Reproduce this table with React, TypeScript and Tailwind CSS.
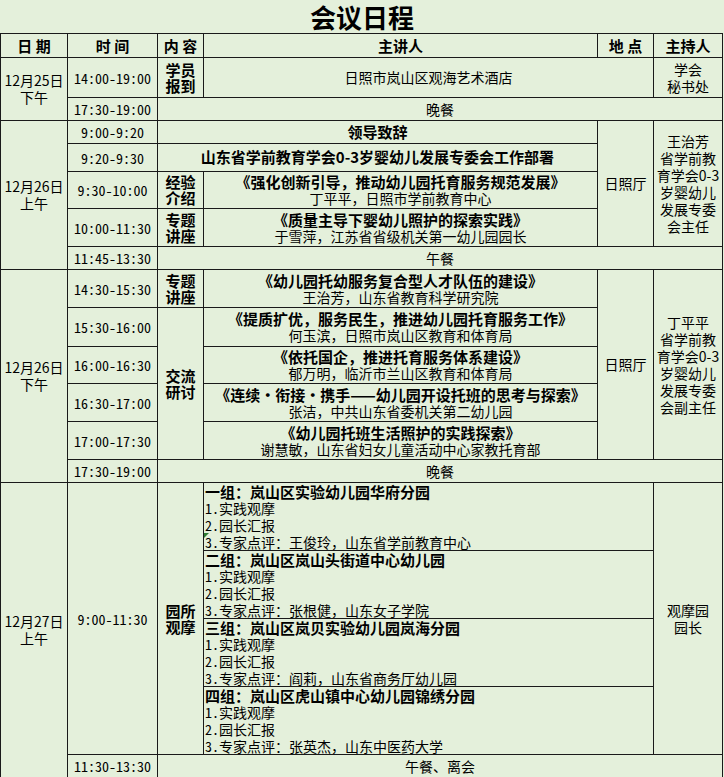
import type { ReactNode } from "react";

const MONO = "font-['Noto_Sans_Mono_CJK_SC','Liberation_Mono',monospace]";

function Cell({ className = "", children }: { className?: string; children?: ReactNode }) {
  return (
    <div className={`flex flex-col items-center justify-center bg-[#e4f0db] text-center ${className}`}>
      {children}
    </div>
  );
}

function Head({ children }: { children: ReactNode }) {
  return <Cell className="text-[15px] font-bold leading-none">{children}</Cell>;
}

function Time({ children, className = "" }: { children: ReactNode; className?: string }) {
  return <Cell className={`${MONO} text-[14px] leading-none ${className}`}>{children}</Cell>;
}

function Stack({ lines, bold, className = "" }: { lines: string[]; bold?: boolean; className?: string }) {
  return (
    <Cell className={`${bold ? "text-[15px] font-bold leading-[16px]" : "text-[14px] leading-[17px]"} ${className}`}>
      {lines.map((line) => (
        <p key={line}>{line}</p>
      ))}
    </Cell>
  );
}

function Talk({ title, speaker }: { title: string; speaker: string }) {
  return (
    <Cell className="leading-[17px]">
      <p className="text-[15px] font-bold">{title}</p>
      <p className="text-[14px]">{speaker}</p>
    </Cell>
  );
}

function Meal({ children }: { children: ReactNode }) {
  return <Cell className="col-span-4 text-[14px] leading-none">{children}</Cell>;
}

function Group({ name, expert, marker }: { name: string; expert: string; marker?: boolean }) {
  return (
    <div className="relative col-span-2 overflow-hidden bg-[#e4f0db] px-px text-[14px] leading-[17px] whitespace-nowrap">
      <p className="text-[15px] font-bold">{name}</p>
      <p>
        <span className={MONO}>1.</span>实践观摩
      </p>
      <p>
        <span className={MONO}>2.</span>园长汇报
      </p>
      <p>
        <span className={MONO}>3.</span>专家点评：{expert}
      </p>
      {marker && (
        <span className="absolute top-[50px] left-0 h-0 w-0 border-t-[5px] border-r-[5px] border-t-[#2f7d32] border-r-transparent" />
      )}
    </div>
  );
}

export default function App() {
  return (
    <div className="min-h-screen w-[724px] bg-[#e4f0db] font-['Noto_Sans_CJK_SC',sans-serif] text-black">
      <h1 className="flex h-[33px] items-center justify-center text-[26px] leading-none font-bold">会议日程</h1>

      <div className="grid w-[723px] grid-cols-[66px_89px_45px_393px_55px_68px] grid-rows-[23px_39px_22px_22px_27px_36px_37px_22px_37px_38px_36px_37px_37px_22px_67px_67px_67px_67px_22px] gap-px bg-[#1a1a1a] p-px">
        <Head>日&nbsp;期</Head>
        <Head>时&nbsp;间</Head>
        <Head>内&nbsp;容</Head>
        <Head>主讲人</Head>
        <Head>地&nbsp;点</Head>
        <Head>主持人</Head>

        {/* 12月25日 */}
        <Stack lines={["12月25日", "下午"]} className="row-span-2" />
        <Time>14:00-19:00</Time>
        <Stack lines={["学员", "报到"]} bold />
        <Cell className="col-span-2 text-[14px]">日照市岚山区观海艺术酒店</Cell>
        <Stack lines={["学会", "秘书处"]} />
        <Time>17:30-19:00</Time>
        <Meal>晚餐</Meal>

        {/* 12月26日 上午 */}
        <Stack lines={["12月26日", "上午"]} className="row-span-5" />
        <Time>9:00-9:20</Time>
        <Cell className="col-span-2 text-[15px] font-bold">领导致辞</Cell>
        <Cell className="row-span-4 text-[14px]">日照厅</Cell>
        <Stack
          lines={["王治芳", "省学前教", "育学会0-3", "岁婴幼儿", "发展专委", "会主任"]}
          className="row-span-4 whitespace-nowrap"
        />
        <Time>9:20-9:30</Time>
        <Cell className="col-span-2 text-[15px] font-bold">山东省学前教育学会0-3岁婴幼儿发展专委会工作部署</Cell>
        <Time>9:30-10:00</Time>
        <Stack lines={["经验", "介绍"]} bold />
        <Talk title="《强化创新引导，推动幼儿园托育服务规范发展》" speaker="丁平平，日照市学前教育中心" />
        <Time>10:00-11:30</Time>
        <Stack lines={["专题", "讲座"]} bold />
        <Talk title="《质量主导下婴幼儿照护的探索实践》" speaker="于雪萍，江苏省省级机关第一幼儿园园长" />
        <Time>11:45-13:30</Time>
        <Meal>午餐</Meal>

        {/* 12月26日 下午 */}
        <Stack lines={["12月26日", "下午"]} className="row-span-6" />
        <Time>14:30-15:30</Time>
        <Stack lines={["专题", "讲座"]} bold />
        <Talk title="《幼儿园托幼服务复合型人才队伍的建设》" speaker="王治芳，山东省教育科学研究院" />
        <Cell className="row-span-5 text-[14px]">日照厅</Cell>
        <Stack
          lines={["丁平平", "省学前教", "育学会0-3", "岁婴幼儿", "发展专委", "会副主任"]}
          className="row-span-5 whitespace-nowrap"
        />
        <Time>15:30-16:00</Time>
        <Stack lines={["交流", "研讨"]} bold className="row-span-4" />
        <Talk title="《提质扩优，服务民生，推进幼儿园托育服务工作》" speaker="何玉滨，日照市岚山区教育和体育局" />
        <Time>16:00-16:30</Time>
        <Talk title="《依托国企，推进托育服务体系建设》" speaker="郁万明，临沂市兰山区教育和体育局" />
        <Time>16:30-17:00</Time>
        <Talk title="《连续・衔接・携手——幼儿园开设托班的思考与探索》" speaker="张洁，中共山东省委机关第二幼儿园" />
        <Time>17:00-17:30</Time>
        <Talk title="《幼儿园托班生活照护的实践探索》" speaker="谢慧敏，山东省妇女儿童活动中心家教托育部" />
        <Time>17:30-19:00</Time>
        <Meal>晚餐</Meal>

        {/* 12月27日 */}
        <Stack lines={["12月27日", "上午"]} className="row-span-5" />
        <Time className="row-span-4">9:00-11:30</Time>
        <Stack lines={["园所", "观摩"]} bold className="row-span-4" />
        <Group name="一组：岚山区实验幼儿园华府分园" expert="王俊玲，山东省学前教育中心" marker />
        <Stack lines={["观摩园", "园长"]} className="row-span-4" />
        <Group name="二组：岚山区岚山头街道中心幼儿园" expert="张根健，山东女子学院" />
        <Group name="三组：岚山区岚贝实验幼儿园岚海分园" expert="阎莉，山东省商务厅幼儿园" />
        <Group name="四组：岚山区虎山镇中心幼儿园锦绣分园" expert="张英杰，山东中医药大学" />
        <Time>11:30-13:30</Time>
        <Meal>午餐、离会</Meal>
      </div>
    </div>
  );
}
